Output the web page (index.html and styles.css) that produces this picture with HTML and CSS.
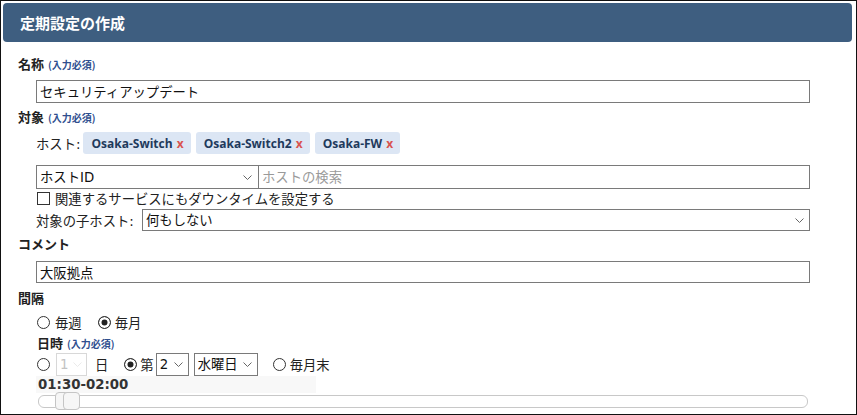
FILE: index.html
```html
<!DOCTYPE html>
<html lang="ja">
<head>
<meta charset="utf-8">
<title>定期設定の作成</title>
<link rel="stylesheet" href="styles.css">
</head>
<body>
<div class="frame">
  <div class="header"><h1 class="title">定期設定の作成</h1></div>
  <div class="content">
    <div class="label l-name">名称 <span class="req">(入力必須)</span></div>
    <div class="field f-name"><input class="text" type="text" value="セキュリティアップデート"></div>

    <div class="label l-target">対象 <span class="req">(入力必須)</span></div>
    <div class="field host-row">
      <span class="host-label">ホスト:</span>
      <span class="tag">Osaka-Switch <span class="x">x</span></span>
      <span class="tag">Osaka-Switch2 <span class="x">x</span></span>
      <span class="tag">Osaka-FW <span class="x">x</span></span>
    </div>
    <div class="field search-row">
      <span class="selwrap host-id">
        <select class="sel"><option>ホストID</option></select>
        <svg class="chev" width="9" height="5" viewBox="0 0 9 5"><path d="M0.5 0.5L4.5 4.5L8.5 0.5" fill="none" stroke="#666" stroke-width="1"/></svg>
      </span>
      <input class="text search" type="text" placeholder="ホストの検索">
    </div>
    <label class="field check-row"><input type="checkbox" class="cb"><span>関連するサービスにもダウンタイムを設定する</span></label>
    <div class="field child-row">
      <span class="child-label">対象の子ホスト:</span>
      <span class="selwrap child">
        <select class="sel"><option>何もしない</option></select>
        <svg class="chev" width="9" height="5" viewBox="0 0 9 5"><path d="M0.5 0.5L4.5 4.5L8.5 0.5" fill="none" stroke="#666" stroke-width="1"/></svg>
      </span>
    </div>

    <div class="label l-comment">コメント</div>
    <div class="field f-comment"><input class="text" type="text" value="大阪拠点"></div>

    <div class="label l-interval">間隔</div>
    <div class="field radio-row">
      <label class="opt"><input type="radio" name="iv" class="rd"><span>毎週</span></label>
      <label class="opt opt-month"><input type="radio" name="iv" class="rd" checked><span>毎月</span></label>
    </div>

    <div class="sublabel">日時 <span class="req">(入力必須)</span></div>
    <div class="field date-row">
      <input type="radio" name="dm" class="rd">
      <span class="selwrap s-day disabled">
        <select class="sel" disabled><option>1</option></select>
        <svg class="chev" width="9" height="5" viewBox="0 0 9 5"><path d="M0.5 0.5L4.5 4.5L8.5 0.5" fill="none" stroke="#bbb" stroke-width="1"/></svg>
      </span>
      <span class="unit">日</span>
      <input type="radio" name="dm" class="rd r-nth" checked>
      <span class="nth">第</span>
      <span class="selwrap s-week">
        <select class="sel"><option>2</option></select>
        <svg class="chev" width="9" height="5" viewBox="0 0 9 5"><path d="M0.5 0.5L4.5 4.5L8.5 0.5" fill="none" stroke="#666" stroke-width="1"/></svg>
      </span>
      <span class="selwrap s-dow">
        <select class="sel"><option>水曜日</option></select>
        <svg class="chev" width="9" height="5" viewBox="0 0 9 5"><path d="M0.5 0.5L4.5 4.5L8.5 0.5" fill="none" stroke="#666" stroke-width="1"/></svg>
      </span>
      <input type="radio" name="dm" class="rd r-end">
      <span class="end">毎月末</span>
    </div>
    <div class="field time">01:30-02:00</div>
    <div class="slider">
      <span class="handle h1"></span>
      <span class="handle h2"></span>
    </div>
  </div>
</div>
</body>
</html>
```
FILE: styles.css
```css
html, body {
  margin: 0;
  padding: 0;
  background: #fff;
}
body {
  font-family: "DejaVu Sans", "Noto Sans CJK JP", sans-serif;
  font-size: 13.33px;
  color: #222;
}
.frame {
  width: 857px;
  height: 415px;
  box-sizing: border-box;
  border: 1px solid #111;
  overflow: hidden;
  background: #fff;
}
.header {
  margin: 2px 4px 0 2px;
  height: 39px;
  background: #3e5e80;
  border-radius: 4px;
  display: flex;
  align-items: center;
}
.title {
  margin: 0 0 0 17px;
  font-family: "Noto Sans CJK JP", sans-serif;
  font-size: 15px;
  font-weight: 700;
  color: #fff;
  line-height: 20px;
}
.content {
  padding: 0 46px 0 17px;
  display: flex;
  flex-direction: column;
}
.label, .sublabel {
  font-family: "Noto Sans CJK JP", sans-serif;
  font-weight: 700;
  font-size: 13px;
  line-height: 16px;
  height: 16px;
  color: #222;
}
.sublabel { margin-left: 19px; }
.req {
  font-size: 10px;
  color: #2f4f8f;
  font-weight: 700;
  margin-left: 1px;
}
.l-name { margin-top: 14px; }
.l-target { margin-top: 6px; }
.l-comment { margin-top: 5px; }
.l-interval { margin-top: 7px; }
.sublabel { margin-top: 4px; }

.field {
  margin-left: 18px;
  display: flex;
  align-items: center;
}
.text {
  box-sizing: border-box;
  width: 100%;
  height: 23px;
  margin: 0;
  padding: 0 3px;
  border: 1px solid #7a7a7a;
  border-radius: 0;
  font-family: "DejaVu Sans", "Noto Sans CJK JP", sans-serif;
  font-size: 13.33px;
  color: #111;
  background: #fff;
  outline: none;
}
.text::placeholder { color: #9a9a9a; }
.f-name { margin-top: 8px; }
.f-comment { margin-top: 9px; }
.f-comment .text { height: 22px; }

.host-row {
  margin-top: 7px;
  height: 22px;
}
.host-label { margin-right: 3px; }
.tag {
  display: inline-flex;
  align-items: center;
  height: 22px;
  padding: 0 7px 0 8px;
  margin-right: 5px;
  background: #dce6f4;
  border-radius: 3px;
  font-family: "Open Sans", sans-serif;
  font-weight: 700;
  font-size: 12px;
  color: #1f3a5c;
  white-space: pre;
}
.x { color: #d9534f; margin-left: 1px; }

.selwrap {
  display: inline-grid;
  box-sizing: border-box;
}
.selwrap .sel, .selwrap .chev { grid-area: 1 / 1; }
.sel {
  -webkit-appearance: none;
  appearance: none;
  box-sizing: border-box;
  width: 100%;
  height: 100%;
  margin: 0;
  padding: 0 3px;
  border: 1px solid #7a7a7a;
  border-radius: 0;
  background: #fff;
  font-family: "DejaVu Sans", "Noto Sans CJK JP", sans-serif;
  font-size: 13.33px;
  color: #111;
  outline: none;
}
.chev {
  justify-self: end;
  align-self: center;
  margin-right: 6px;
  pointer-events: none;
}

.search-row {
  margin-top: 11px;
  height: 24px;
}
.host-id { width: 222px; height: 24px; }
.host-id .sel { border-right: none; }
.search { height: 24px; flex: 1; }

.check-row {
  height: 18px;
  gap: 5px;
}
.cb {
  -webkit-appearance: none;
  appearance: none;
  width: 13px;
  height: 13px;
  margin: 0 0 0 1px;
  border: 1px solid #333;
  background: #fff;
  box-sizing: border-box;
}

.child-row {
  margin-top: 2px;
  height: 22px;
}
.child-label { width: 106px; }
.child { flex: 1; height: 22px; }

.radio-row {
  margin-top: 7px;
  height: 18px;
}
.opt {
  display: inline-flex;
  align-items: center;
  gap: 5px;
}
.opt-month { margin-left: 15px; gap: 4px; }
.rd {
  -webkit-appearance: none;
  appearance: none;
  width: 13px;
  height: 13px;
  margin: 0 0 0 1px;
  border: 1px solid #333;
  border-radius: 50%;
  background: #fff;
  box-sizing: border-box;
}
.rd:checked {
  background: #222;
  box-shadow: inset 0 0 0 2.5px #fff;
}

.date-row {
  margin-top: 2px;
  height: 23px;
}
.date-row .selwrap { height: 23px; }
.s-day { width: 31px; margin-left: 6px; }
.s-day .sel { color: #aaa; border-color: #c8c8c8; background: #fff; }
.s-day .chev { margin-right: 5px; }
.unit { margin-left: 8px; }
.r-nth { margin-left: 16px; }
.nth { margin-left: 3px; }
.s-week { width: 33px; margin-left: 2px; }
.s-dow { width: 64px; margin-left: 5px; }
.r-end { margin-left: 15px; }
.end { margin-left: 4px; }

.time {
  width: 278px;
  height: 17px;
  padding-left: 2px;
  background: #f8f8f8;
  font-weight: 700;
  font-size: 13.33px;
  color: #333;
}
.slider {
  position: relative;
  margin: 2px 2px 0 20px;
  height: 13px;
  box-sizing: border-box;
  border: 1px solid #c8c8c8;
  border-radius: 6px;
  background: #fff;
}
.handle {
  position: absolute;
  top: -4px;
  width: 17px;
  height: 18px;
  box-sizing: border-box;
  border: 1px solid #c5c5c5;
  border-radius: 4px;
  background: #f6f6f6;
}
.h1 { left: 16px; }
.h2 { left: 24px; }
```
